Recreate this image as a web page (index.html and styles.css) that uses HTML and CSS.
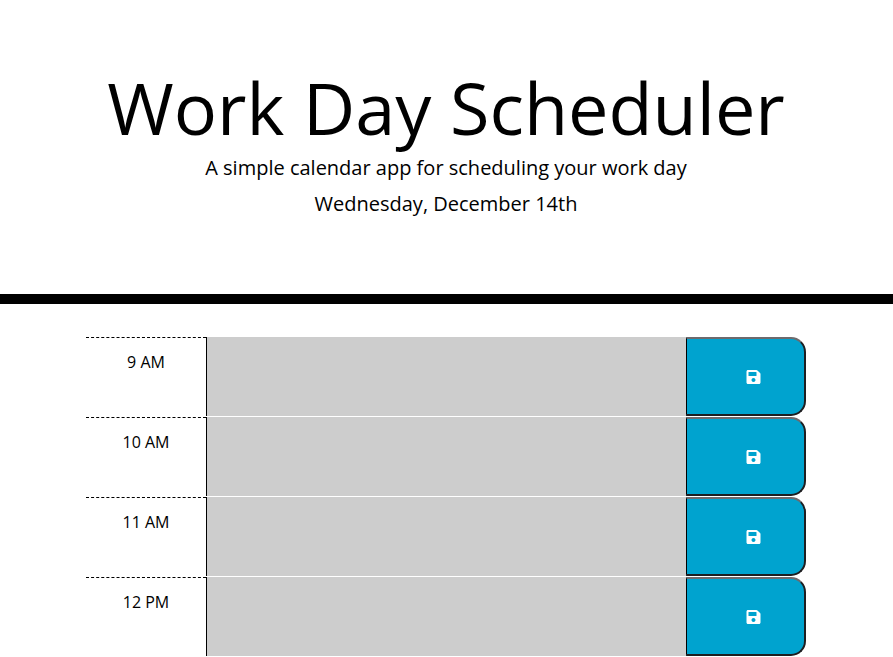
FILE: index.html
```html
<!DOCTYPE html>
<html lang="en">
<head>
<meta charset="utf-8">
<title>Work Day Scheduler</title>
<link rel="stylesheet" href="styles.css">
</head>
<body>
<svg class="symbols" aria-hidden="true"><symbol id="save" viewBox="0 0 448 512"><path fill="currentColor" d="M433.941 129.941l-83.882-83.882A48 48 0 0 0 316.118 32H48C21.49 32 0 53.49 0 80v352c0 26.51 21.49 48 48 48h352c26.51 0 48-21.49 48-48V163.882a48 48 0 0 0-14.059-33.941zM224 416c-35.346 0-64-28.654-64-64s28.654-64 64-64 64 28.654 64 64-28.654 64-64 64zm96-304.52V212c0 6.627-5.373 12-12 12H76c-6.627 0-12-5.373-12-12V108c0-6.627 5.373-12 12-12h228.52c3.183 0 6.235 1.264 8.485 3.515l3.48 3.48A11.996 11.996 0 0 1 320 111.48z"/></symbol></svg>
<header class="header">
<h1 class="title">Work Day Scheduler</h1>
<p class="lead">A simple calendar app for scheduling your work day</p>
<p class="lead">Wednesday, December 14th</p>
</header>
<main class="schedule">
<div class="row"><div class="hour">9 AM</div><textarea class="past"></textarea><button class="save" aria-label="Save"><svg><use href="#save"/></svg></button></div>
<div class="row"><div class="hour">10 AM</div><textarea class="past"></textarea><button class="save" aria-label="Save"><svg><use href="#save"/></svg></button></div>
<div class="row"><div class="hour">11 AM</div><textarea class="past"></textarea><button class="save" aria-label="Save"><svg><use href="#save"/></svg></button></div>
<div class="row"><div class="hour">12 PM</div><textarea class="past"></textarea><button class="save" aria-label="Save"><svg><use href="#save"/></svg></button></div>
</main>
</body>
</html>
```
FILE: styles.css
```css
* { box-sizing: border-box; }
body { margin: 0; height: 657px; overflow: hidden; background: #fff; color: #000; font-family: "Open Sans", sans-serif; font-size: 16px; line-height: 1.5; }
.symbols { display: none; }
.header { height: 304px; padding: 64px 1px 0 0; border-bottom: 10px solid #000; text-align: center; }
.title { margin: 0 0 3px; font-size: 72px; font-weight: 400; line-height: 86px; }
.lead { margin: 0 0 6px; font-size: 20px; line-height: 30px; }
.schedule { width: 720px; margin: 33px auto 0 86px; }
.row { display: flex; height: 80px; }
.hour { width: 120px; padding-top: 12px; border-top: 1px dashed #000; text-align: center; }
.past { width: 480px; height: 79px; margin: 0; padding: 0; border: 0; border-left: 1px solid #000; background: #cdcdcd; resize: none; outline: 0; }
.save { display: flex; align-items: center; width: 120px; height: 79px; padding: 0 0 0 59px; border: 2px solid #1e1e20; border-top-color: #6d6a6d; border-left: 1px solid #000; border-radius: 0 15px 15px 0; background: #00a3cf; color: #fff; }
.save svg { width: 15px; height: 16px; margin-left: 0.2px; }
```
